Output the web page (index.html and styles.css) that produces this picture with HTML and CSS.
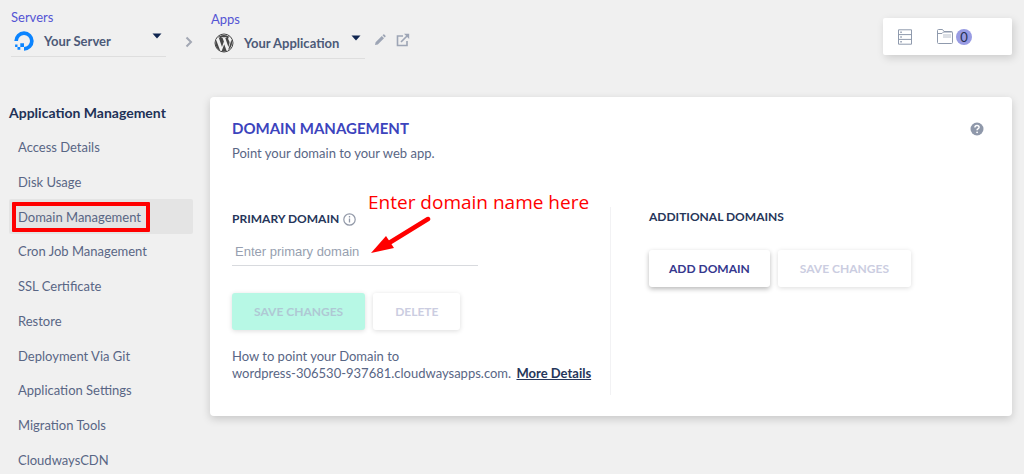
FILE: index.html
```
<!DOCTYPE html>
<html lang="en">
<head>
<meta charset="utf-8">
<meta name="viewport" content="width=device-width, initial-scale=1">
<title>Domain Management</title>
<link rel="stylesheet" href="styles.css">
</head>
<body>
<header class="topbar">
  <div class="crumb">
    <a class="crumb-label" href="#servers">Servers</a>
    <button class="picker" type="button">
      <svg class="logo" viewBox="0 0 20 20" aria-hidden="true"><path d="M10 19.700V16A6 6 0 1 0 4 10H.3A9.700 9.700 0 1 1 10 19.700Z" fill="#0b84ff"/><path d="M6.300 12.300H10V16H6.300ZM3.500 16h2.800v2.800H3.500ZM1.100 13.600h2.400V16H1.100Z" fill="#0b84ff"/></svg>
      <span class="picker-name">Your Server</span>
      <svg class="caret" viewBox="0 0 10 6" aria-hidden="true"><path d="M.5.500h9L5 5.500Z" fill="#0f2550"/></svg>
    </button>
  </div>
  <svg class="chevron" viewBox="0 0 8 12" aria-hidden="true"><path d="M1.500 1.500 6 6l-4.500 4.500" fill="none" stroke="#a3a8b4" stroke-width="2"/></svg>
  <div class="crumb crumb-app">
    <a class="crumb-label" href="#apps">Apps</a>
    <button class="picker" type="button">
      <svg class="logo" viewBox="0 0 20 20" aria-hidden="true"><circle cx="10" cy="10" r="9" fill="none" stroke="#464646" stroke-width="1"/><path d="M2.200 7 6.300 18A8.500 8.500 0 0 1 2.200 7ZM10.200 11.200l2.500 6.800q-2.700.8-5.100.2ZM17.300 6.200c1.600 3.500.6 8.300-3.200 10.700l2.400-7.100c.5-1.500.9-2.300.8-3.600ZM3.200 5.500C6 1.300 12 1 15.500 4.100c-1.500.3-1.600 1.700-.9 2.900.8 1.300 1.200 2.200.7 4l-.9 3-3.100-9h1.100v-.7H7.600V5h1l1.300 3.500L8 14 4.900 5h1v-.6H4Z" fill="#464646"/></svg>
      <span class="picker-name">Your Application</span>
      <svg class="caret" viewBox="0 0 10 6" aria-hidden="true"><path d="M.5.500h9L5 5.500Z" fill="#0f2550"/></svg>
    </button>
  </div>
  <div class="app-actions">
    <button class="icon-button" type="button" aria-label="Rename application"><svg width="12" height="12" viewBox="0 0 12 12"><path d="M1 11l.6-2.800 6.200-6.200 2.200 2.200-6.200 6.200ZM8.500 1.300l.8-.8q.5-.3 1 0l1.200 1.200q.3.500 0 1l-.8.800Z" fill="#9da5b5"/></svg></button>
    <button class="icon-button" type="button" aria-label="Open application"><svg width="14" height="14" viewBox="0 0 14 14"><path d="M7 3H1.500v9.500H11V8M5 9l6.500-6.500" fill="none" stroke="#9da5b5" stroke-width="1.600"/><path d="M8 .8h5.200V6Z" fill="#9da5b5"/></svg></button>
  </div>
  <div class="quick">
    <button class="icon-button" type="button" aria-label="Servers list"><svg width="14" height="16" viewBox="0 0 14 16"><path d="M.5.800h13v14.400H.5ZM.5 5.600h13M.5 10.400h13" fill="none" stroke="#8f9aad"/><path d="M2.300 2.400h1.500v1.600H2.300ZM2.300 7.200h1.500v1.600H2.300ZM2.300 12h1.500v1.600H2.300Z" fill="#8f9aad"/></svg></button>
    <button class="icon-button projects" type="button" aria-label="Projects, 0"><svg width="16" height="16" viewBox="0 0 16 16"><path d="M.5 13.500v-12q0-1 1-1h4l1.500 2h7.500q1 0 1 1v10q0 1-1 1h-13q-1 0-1-1ZM.5 4.500H5L6.500 3H15" fill="none" stroke="#8f9aad"/><path d="M6 6h8M6 8h8" stroke="#b9c0cc"/></svg><span class="count">0</span></button>
  </div>
</header>
<div class="layout">
  <nav class="sidebar" aria-labelledby="nav-title">
    <h2 class="nav-title" id="nav-title">Application Management</h2>
    <ul class="nav-list">
      <li><a class="nav-link" href="#access">Access Details</a></li>
      <li><a class="nav-link" href="#disk">Disk Usage</a></li>
      <li><a class="nav-link active" href="#domain" aria-current="page">Domain Management</a></li>
      <li><a class="nav-link" href="#cron">Cron Job Management</a></li>
      <li><a class="nav-link" href="#ssl">SSL Certificate</a></li>
      <li><a class="nav-link" href="#restore">Restore</a></li>
      <li><a class="nav-link" href="#git">Deployment Via Git</a></li>
      <li><a class="nav-link" href="#settings">Application Settings</a></li>
      <li><a class="nav-link" href="#migration">Migration Tools</a></li>
      <li><a class="nav-link" href="#cdn">CloudwaysCDN</a></li>
    </ul>
  </nav>
  <main class="card">
    <div class="card-head">
      <div>
        <h1 class="card-title">DOMAIN MANAGEMENT</h1>
        <p class="card-text">Point your domain to your web app.</p>
      </div>
      <button class="icon-button" type="button" aria-label="Help"><svg width="14" height="14" viewBox="0 0 14 14"><circle cx="7" cy="7" r="6.500" fill="#8f98aa"/><path d="M4.900 5.500Q5 3.400 7 3.400q2.100 0 2.100 1.800Q9 6.300 7.900 6.900q-.8.500-.8 1.300" fill="none" stroke="#fff" stroke-width="1.500"/><circle cx="7.100" cy="10.300" r=".9" fill="#fff"/></svg></button>
    </div>
    <div class="columns">
      <section class="primary">
        <div class="label-row">
          <label class="section-label" for="primary-domain">PRIMARY DOMAIN</label>
          <svg width="13" height="13" viewBox="0 0 13 13" aria-hidden="true"><circle cx="6.500" cy="6.500" r="5.700" fill="none" stroke="#9299a8" stroke-width="1.200"/><path d="M6.500 5.500v4M6.500 3v1.400" stroke="#9299a8" stroke-width="1.300"/></svg>
        </div>
        <input class="domain-input" id="primary-domain" type="text" placeholder="Enter primary domain">
        <div class="buttons">
          <button class="button button-green" type="button" disabled>SAVE CHANGES</button>
          <button class="button" type="button" disabled>DELETE</button>
        </div>
        <p class="card-text hint">How to point your Domain to<br>wordpress-306530-937681.cloudwaysapps.com. <a class="more" href="#details">More Details</a></p>
        <div class="note">
          <span class="note-text">Enter domain name here</span>
          <svg class="note-arrow" width="60" height="40" viewBox="0 0 60 40" aria-hidden="true"><path d="M57 4 18 28" stroke="#f00" stroke-width="4.500" stroke-linecap="round"/><path d="M0 38 15 21l8 12Z" fill="#f00"/></svg>
        </div>
      </section>
      <section class="additional">
        <h2 class="section-label">ADDITIONAL DOMAINS</h2>
        <div class="buttons">
          <button class="button button-strong" type="button">ADD DOMAIN</button>
          <button class="button" type="button" disabled>SAVE CHANGES</button>
        </div>
      </section>
    </div>
  </main>
</div>
</body>
</html>
```
FILE: styles.css
```
* { box-sizing: border-box; }
body {
  margin: 0;
  background: #f0f0f0;
  color: #596685;
  font: 13px/18px Lato, "Liberation Sans", sans-serif;
}
h1, h2, p, ul { margin: 0; padding: 0; }
ul { list-style: none; }
button { padding: 0; border: 0; background: none; font: inherit; color: inherit; cursor: pointer; }
svg { display: block; flex: none; }
.icon-button { display: flex; align-items: center; }

.topbar { display: flex; align-items: flex-start; padding: 8px 12px 0 11px; }
.crumb { width: 155px; border-bottom: 1px solid #dedede; }
.crumb-app { width: 154px; margin-top: 2px; }
.crumb-label { display: block; color: #5454d4; text-decoration: none; }
.picker { display: flex; align-items: center; width: 100%; height: 30px; padding: 0 4px 0 3px; text-align: left; }
.logo { width: 20px; height: 20px; margin-right: 10px; }
.picker-name { flex: 1; color: #4c5a78; font-weight: 700; white-space: nowrap; }
.caret { width: 10px; height: 6px; margin-bottom: 10px; }
.chevron { width: 8px; height: 12px; margin: 28px 18px 0 19px; }
.app-actions { display: flex; align-items: center; gap: 10px; margin: 25px 0 0 9px; }
.quick {
  display: flex; align-items: center; gap: 25px;
  width: 129px; height: 37px; margin: 10px 0 0 auto; padding-left: 15px;
  border-radius: 2px; background: #fff; box-shadow: 2px 3px 8px rgba(0, 0, 0, .15);
}
.projects { gap: 3px; }
.count { width: 16px; height: 16px; border-radius: 50%; background: #989be3; color: #26304f; line-height: 16px; text-align: center; }

.layout { display: flex; align-items: flex-start; gap: 17px; padding: 38px 12px 0 9px; }
.sidebar { flex: none; width: 184px; padding-top: 7px; }
.nav-title { color: #213156; font-size: 14px; line-height: 18px; white-space: nowrap; }
.nav-list { display: grid; grid-auto-rows: 1fr; min-height: 347px; margin-top: 8px; }
.nav-link { display: flex; align-items: center; height: 100%; padding: 0 9px; border-radius: 2px; color: inherit; text-decoration: none; }
.active { position: relative; background: #e4e4e4; }
.active::after { content: ""; position: absolute; inset: 3px 43px 2px 3px; border: 4px solid #f00; border-radius: 1px; }

.card { flex: 1; min-width: 0; padding: 21px 22px; border-radius: 4px; background: #fff; box-shadow: 0 3px 8px rgba(0, 0, 0, .17); }
.card-head { display: flex; justify-content: space-between; align-items: flex-start; padding-right: 6px; }
.card-head .icon-button { margin-top: 4px; }
.card-title { color: #3c44bd; font-size: 15px; line-height: 20px; font-weight: 700; }
.card-text { font-size: 13px; line-height: 17px; }
.card-head .card-text { margin-top: 7px; }
.columns { display: flex; margin-top: 45px; }
.primary { position: relative; flex: 0 0 379px; min-height: 188px; border-right: 1px solid #f2f2f4; }
.additional { flex: 1; padding: 1px 0 0 38px; }
.label-row { display: flex; align-items: center; gap: 4px; margin-top: 3px; }
.section-label { color: #26365a; font-size: 12px; line-height: 18px; font-weight: 700; }
.domain-input {
  display: block; width: 246px; height: 28px; margin-top: 10px; padding: 0 3px;
  border: 0; border-bottom: 1px solid #d8dade; background: none;
  color: #4c5a78; font: 13px "Liberation Sans", Arial, sans-serif;
}
.domain-input::placeholder { color: #979fb0; opacity: 1; }
.buttons { display: flex; gap: 8px; margin-top: 27px; }
.additional .buttons { margin-top: 24px; }
.button {
  height: 37px; padding: 0 22px; border-radius: 3px; background: #fff;
  color: #cbcde1; font-size: 12px; font-weight: 700; box-shadow: 0 1px 5px rgba(0, 0, 0, .14);
}
.button-green { background: #b7f8e5; color: #afc8d4; }
.button-strong { padding: 0 20px; color: #35388e; box-shadow: 0 2px 5px rgba(0, 0, 0, .28); }
.hint { margin-top: 18px; white-space: nowrap; }
.more { margin-left: 2px; color: #26365a; font-weight: 700; }
.note { position: absolute; top: -18px; left: 136px; color: #f00; }
.note-text { font: 19px/26px "Open Sans", "Noto Sans", sans-serif; white-space: nowrap; }
.note-arrow { margin-left: 3px; }
```
